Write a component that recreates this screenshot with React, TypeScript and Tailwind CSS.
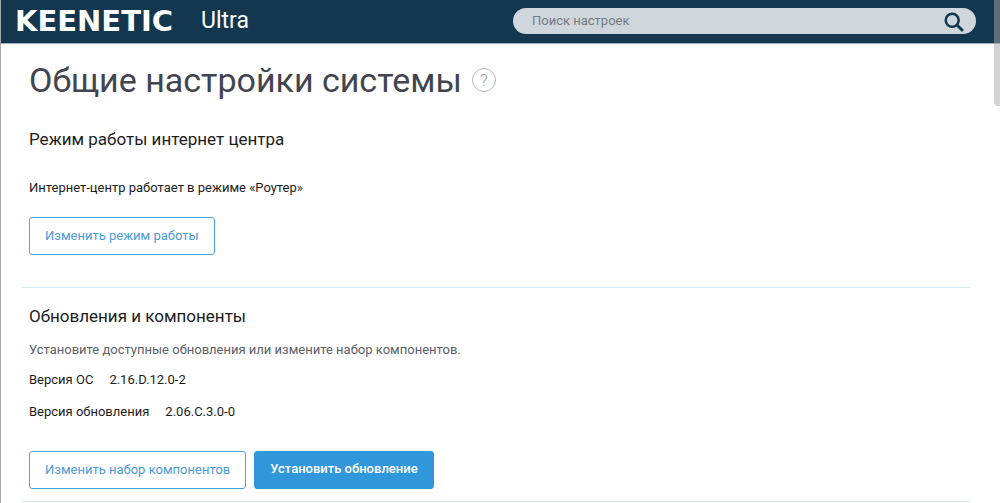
import { useState } from "react";
import type { ReactNode } from "react";

const versions = [
  { label: "Версия ОС", value: "2.16.D.12.0-2" },
  { label: "Версия обновления", value: "2.06.C.3.0-0" },
];

type ButtonProps = {
  children: ReactNode;
  primary?: boolean;
};

function Button({ children, primary }: ButtonProps) {
  return (
    <button
      type="button"
      className={
        primary
          ? "h-[38px] cursor-pointer rounded-[3px] border border-[#3097da] bg-[#3097da] px-[15px] pb-0.5 font-medium text-white"
          : "h-[38px] cursor-pointer rounded-[3px] border border-[#4ba3de] bg-white px-[15px] text-[#4a9bdb]"
      }
    >
      {children}
    </button>
  );
}

function SearchIcon() {
  return (
    <svg viewBox="0 0 20 20" className="size-5" fill="none" stroke="#12374f" aria-hidden>
      <circle cx="8.2" cy="8.2" r="6.5" strokeWidth="2.5" />
      <path d="M13 13 L18 18" strokeWidth="3" strokeLinecap="round" />
    </svg>
  );
}

function Header() {
  const [query, setQuery] = useState("");

  return (
    <header className="flex h-11 items-center justify-between gap-6 border-b border-[#a3aab5] bg-[#12374f] pr-6 pb-0.5 pl-3.5">
      <a href="#" className="flex items-center text-white">
        <span className="w-[186px] font-['DejaVu_Sans',sans-serif] text-[29px] leading-8 font-bold">KEENETIC</span>
        <span className="text-[23px] leading-8">Ultra</span>
      </a>
      <form role="search" className="relative w-[463px]" onSubmit={(e) => e.preventDefault()}>
        <input
          type="text"
          aria-label="Поиск настроек"
          placeholder="Поиск настроек"
          value={query}
          onChange={(e) => setQuery(e.target.value)}
          className="block h-[26px] w-full rounded-full bg-[#cfd7dc] pr-10 pl-[19px] text-[#333] outline-none placeholder:text-[#73797e]"
        />
        <button type="submit" aria-label="Найти" className="absolute top-1 right-3 cursor-pointer">
          <SearchIcon />
        </button>
      </form>
    </header>
  );
}

export default function App() {
  return (
    <div className="relative min-h-screen border-l border-[#a8a8a8] bg-white font-['Roboto',sans-serif] text-[13px] leading-5 text-[#1c1c1c]">
      <Header />
      <main className="pr-[30px] pl-[21px]">
        <div className="flex items-center gap-2.5 px-[7px] pt-4">
          <h1 className="text-[34px] leading-10 text-[#42454f]">Общие настройки системы</h1>
          <button
            type="button"
            aria-label="Справка"
            className="flex size-6 cursor-pointer items-center justify-center rounded-full border border-[#b5b5b5] text-[17px] font-light text-[#a0a0a0]"
          >
            ?
          </button>
        </div>

        <section className="border-b border-[#cfeafa] px-[7px] pt-[27px] pb-8">
          <h2 className="text-[17px] leading-6">Режим работы интернет центра</h2>
          <p className="mt-[27px] mb-[19px]">Интернет-центр работает в режиме «Роутер»</p>
          <Button>Изменить режим работы</Button>
        </section>

        <section className="border-b border-[#cfeafa] px-[7px] pt-4 pb-3">
          <h2 className="text-[17px] leading-6">Обновления и компоненты</h2>
          <p className="mt-3 text-[#5b6068]">
            Установите доступные обновления или измените набор компонентов.
          </p>
          <dl className="mt-2.5 mb-[29px] flex flex-col gap-3">
            {versions.map(({ label, value }) => (
              <div key={label} className="flex gap-4">
                <dt>{label}</dt>
                <dd>{value}</dd>
              </div>
            ))}
          </dl>
          <div className="flex flex-wrap gap-2">
            <Button>Изменить набор компонентов</Button>
            <Button primary>Установить обновление</Button>
          </div>
        </section>
      </main>
      <div className="absolute top-0 right-0 h-[106px] w-1.5 rounded-bl-sm bg-[#a8a8a8]/50" />
    </div>
  );
}
